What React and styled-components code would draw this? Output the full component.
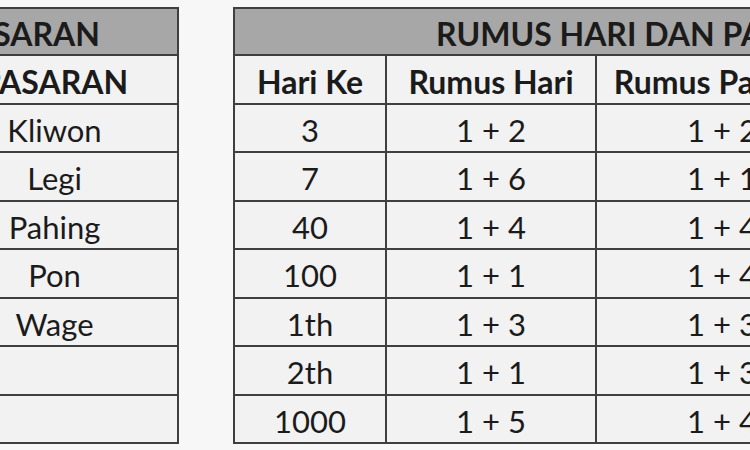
import React from "react";
import styled, { createGlobalStyle } from "styled-components";

const Global = createGlobalStyle`
  html, body { margin: 0; padding: 0; background: #f7f7f7; }
  #root { width: 750px; height: 450px; }
`;

const Page = styled.div`
  width: 750px;
  height: 450px;
  overflow: hidden;
  background: #f7f7f7;
  display: flex;
  align-items: flex-start;
  gap: 54px;
  padding-top: 7px;
  box-sizing: border-box;
  font-family: Lato, "Open Sans", sans-serif;
  color: #1b1b1b;
`;

const Sheet = styled.div`
  flex-shrink: 0;
  display: grid;
  grid-template-columns: ${(p) => p.$cols};
  grid-template-rows: 45px repeat(8, 46.5px);
  gap: 2px;
  padding: 2px;
  background: #3f3f3f;
  margin-left: ${(p) => p.$shift || 0}px;
`;

const Title = styled.div`
  grid-column: 1 / -1;
  background: #a7a7a7;
  display: flex;
  align-items: center;
  justify-content: ${(p) => (p.$align === "right" ? "flex-end" : "flex-start")};
  padding: 3px ${(p) => p.$padR || 0}px 0 ${(p) => p.$padL || 0}px;
  font-weight: 700;
  font-size: 32px;
  white-space: nowrap;
  overflow: hidden;
`;

const Cell = styled.div`
  background: #f2f2f2;
  display: flex;
  align-items: center;
  justify-content: center;
  padding-top: 4px;
  font-size: ${(p) => (p.$head ? 32 : 31)}px;
  font-weight: ${(p) => (p.$head ? 700 : 400)};
  white-space: nowrap;
`;

const pasaran = ["Kliwon", "Legi", "Pahing", "Pon", "Wage", "", ""];

const rumus = [
  ["3", "1 + 2", "1 + 2"],
  ["7", "1 + 6", "1 + 1"],
  ["40", "1 + 4", "1 + 4"],
  ["100", "1 + 1", "1 + 4"],
  ["1th", "1 + 3", "1 + 3"],
  ["2th", "1 + 1", "1 + 3"],
  ["1000", "1 + 5", "1 + 4"],
];

export default function App() {
  return (
    <>
      <Global />
      <Page>
        <Sheet $cols="245px" $shift={-70}>
          <Title $align="right" $padR={77}>PASARAN</Title>
          <Cell $head>PASARAN</Cell>
          {pasaran.map((p, i) => (
            <Cell key={i}>{p}</Cell>
          ))}
        </Sheet>
        <Sheet $cols="150px 208px 250px">
          <Title $padL={201}>RUMUS HARI DAN PASARAN</Title>
          <Cell $head>Hari Ke</Cell>
          <Cell $head>Rumus Hari</Cell>
          <Cell $head>Rumus Pasaran</Cell>
          {rumus.map((r, i) =>
            r.map((v, j) => <Cell key={i + "-" + j}>{v}</Cell>)
          )}
        </Sheet>
      </Page>
    </>
  );
}
